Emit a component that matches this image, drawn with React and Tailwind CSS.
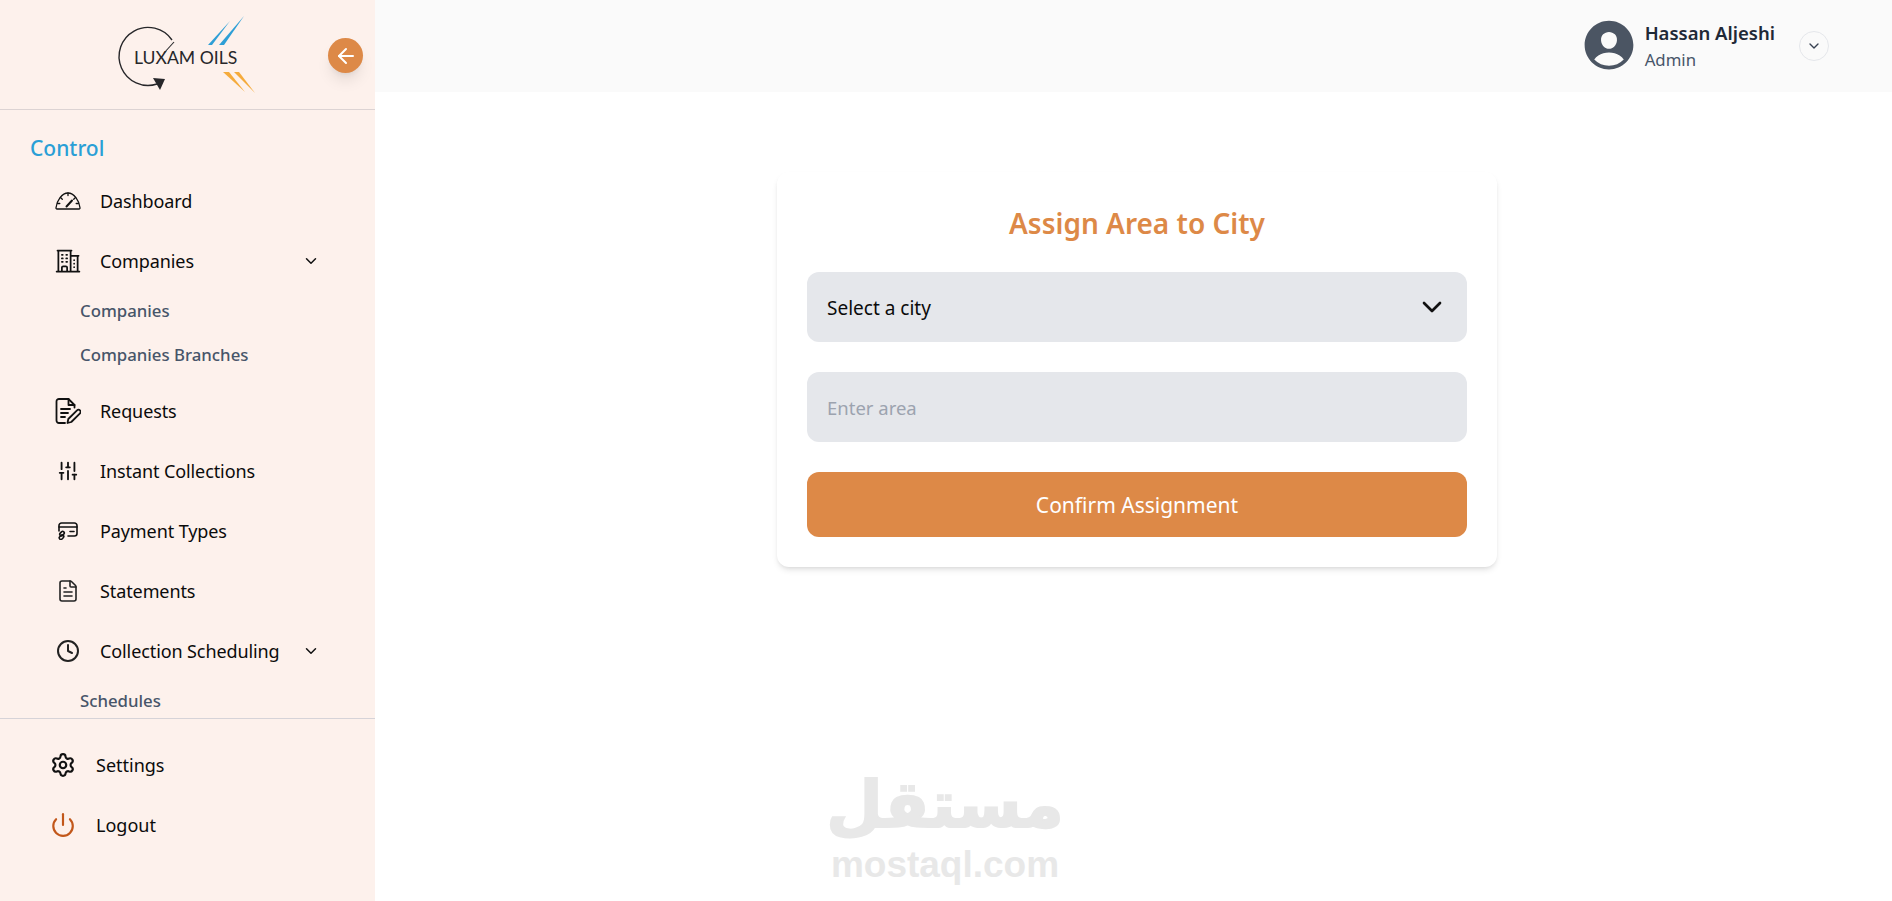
import { ArrowLeft, ChevronDown, SlidersVertical, FileText, Clock, Settings, Power } from "lucide-react";
import { HiOutlineBuildingOffice2 } from "react-icons/hi2";
import { IoPersonCircle } from "react-icons/io5";

const FONT = "[font-family:'Noto_Sans',sans-serif]";

// Hand drawn, no icon package has these three
function GaugeIcon() {
  return (
    <svg width="26" height="18" viewBox="0 0 26 18" fill="none" stroke="#111" strokeWidth="1.3" strokeLinecap="round" strokeLinejoin="round">
      <path d="M2 17h22a1 1 0 0 0 1-1.2C24.2 8.5 19 1 13 1S1.800 8.500 1 15.800A1 1 0 0 0 2 17z" />
      <path d="M13 1v2.500M5.500 5.500l1.800 1.800M20.500 5.500l-1.800 1.800M2.500 11.500h2.300M23.500 11.500h-2.300" />
      <path d="M11.500 14.500l5.500-6" strokeWidth="2" />
    </svg>
  );
}

function RequestsIcon() {
  return (
    <svg width="26" height="26" viewBox="0 0 26 26" fill="none" stroke="#111" strokeWidth="1.8" strokeLinecap="round" strokeLinejoin="round">
      <path d="M10 25H4a2.500 2.500 0 0 1-2.500-2.500v-19A2.500 2.500 0 0 1 4 1h9.500l6 6v2.500" />
      <path d="M13.500 1v6h6" />
      <path d="M6 11h9M6 15h7M6 19h4" />
      <path d="M12.500 25l.8-4 8.700-8.700a2 2 0 0 1 3 3L16.300 24z" />
    </svg>
  );
}

function PaymentIcon() {
  return (
    <svg width="20" height="18" viewBox="0 0 20 18" fill="none" stroke="#111" strokeWidth="1.6" strokeLinecap="round" strokeLinejoin="round">
      <path d="M1 9V3.500A2.500 2.500 0 0 1 3.500 1h13A2.500 2.500 0 0 1 19 3.500v8a2.500 2.500 0 0 1-2.500 2.500H10" />
      <path d="M1 5h18M12 9.500h4" />
      <rect x="1.500" y="10" width="5" height="3.200" rx="1.600" transform="rotate(-45 4 11.600)" />
      <rect x="1" y="13.600" width="5" height="3.200" rx="1.600" transform="rotate(-45 3.500 15.200)" />
    </svg>
  );
}

function Logo() {
  return (
    <svg width="150" height="84" viewBox="115 14 150 84" fill="none">
      <path d="M173 41A29 29 0 1 0 158 85" stroke="#27272a" strokeWidth="1.400" />
      <path d="M154 79l12 1-5 11z" fill="#27272a" />
      <path d="M165 54l10-11" stroke="#27272a" strokeWidth="1.100" />
      <text x="135" y="65" fontFamily="Lato, sans-serif" fontWeight="400" fontSize="17.6" fill="#27272a">LUXAM OILS</text>
      <path d="M209 46h4l18-24z" fill="#2e9fd6" />
      <path d="M220 46h5l20-29z" fill="#2e9fd6" />
      <path d="M224 73h6l16 20z" fill="#f5ab3c" />
      <path d="M235 73h5l16 21z" fill="#f5ab3c" />
    </svg>
  );
}

function NavItem({ icon, label, hasMenu }) {
  return (
    <div className="flex items-center h-[60px] pl-[50px] pr-[55px]">
      <span className="w-[35px] h-[26px] flex items-center justify-center shrink-0 mr-[15px]">{icon}</span>
      <span className="flex-1 text-[18px] tracking-[-0.1px] text-[#0b0b0b] whitespace-nowrap">{label}</span>
      {hasMenu && <ChevronDown size={18} color="#111" />}
    </div>
  );
}

function SubItem({ label }) {
  return (
    <div className="flex items-center h-[44px] pl-[80px] text-[16.8px] font-medium text-[#475569]">{label}</div>
  );
}

export default function App() {
  return (
    <div className={`relative flex h-[901px] w-[1892px] overflow-hidden bg-white ${FONT}`}>
      <aside className="relative flex flex-col w-[375px] shrink-0 bg-[#fdf1ec]">
        <div className="flex items-center justify-center h-[110px] pl-[3px] border-b border-[#dcd3d3]">
          <Logo />
        </div>
        <button className="absolute left-[328px] top-[38px] w-[35px] h-[35px] rounded-full bg-[#dd8947] flex items-center justify-center shadow-lg">
          <ArrowLeft size={24} color="#fff" />
        </button>

        <nav className="flex-1 overflow-hidden">
          <h2 className="pl-[30px] pt-[22px] pb-[7px] text-[21px] leading-[32px] font-medium text-[#2a9fd6]">Control</h2>
          <NavItem icon={<GaugeIcon />} label="Dashboard" />
          <NavItem icon={<HiOutlineBuildingOffice2 size={28} color="#111" />} label="Companies" hasMenu />
          <div className="-mt-[2px] mb-[4px]">
            <SubItem label="Companies" />
            <SubItem label="Companies Branches" />
          </div>
          <NavItem icon={<RequestsIcon />} label="Requests" />
          <NavItem icon={<SlidersVertical size={22} color="#111" />} label="Instant Collections" />
          <NavItem icon={<PaymentIcon />} label="Payment Types" />
          <NavItem icon={<FileText size={24} color="#222" strokeWidth={1.6} />} label="Statements" />
          <NavItem icon={<Clock size={24} color="#222" />} label="Collection Scheduling" hasMenu />
          <div className="-mt-[2px]">
            <SubItem label="Schedules" />
          </div>
        </nav>

        <div className="h-[183px] shrink-0 border-t border-[#d6d3d8] pt-[16px]">
          <div className="flex items-center h-[60px] pl-[50px]">
            <Settings size={26} color="#111" className="mr-[20px]" />
            <span className="text-[18px] text-[#0b0b0b]">Settings</span>
          </div>
          <div className="flex items-center h-[60px] pl-[50px]">
            <Power size={26} color="#c2571a" className="mr-[20px]" />
            <span className="text-[18px] text-[#0b0b0b]">Logout</span>
          </div>
        </div>
      </aside>

      <div className="flex-1 flex flex-col">
        <header className="flex items-center justify-end h-[92px] bg-[#fafafa] pr-[63px]">
          <IoPersonCircle size={60} color="#4b5563" className="mr-[6px] -mt-[2px]" />
          <div className="mr-[24px]">
            <div className="text-[18.500px] leading-[28px] font-semibold text-[#1f2937]">Hassan Aljeshi</div>
            <div className="text-[16.800px] leading-[26px] text-[#475569]">Admin</div>
          </div>
          <div className="w-[30px] h-[30px] rounded-full border border-[#e5e7eb] flex items-center justify-center">
            <ChevronDown size={16} color="#374151" />
          </div>
        </header>

        <main className="flex-1 flex justify-center pt-[80px] pl-[7px]">
          <div className="w-[720px] h-[395px] bg-white rounded-[12px] shadow-md p-[30px]">
            <h1 className="h-[40px] mb-[30px] text-center text-[28px] leading-[42px] font-semibold text-[#dd8947]">Assign Area to City</h1>
            <div className="flex items-center justify-between h-[70px] mb-[30px] pl-[20px] pr-[19px] rounded-[12px] bg-[#e5e7eb] text-[19px] text-[#0b0b0b]">
              <span className="pt-[3px]">Select a city</span>
              <ChevronDown size={32} color="#111" />
            </div>
            <input
              placeholder="Enter area"
              className="block w-full h-[70px] mb-[30px] px-[20px] rounded-[12px] bg-[#e5e7eb] text-[18.500px] placeholder:text-[#9ca3af] outline-none"
            />
            <button className="block w-full h-[65px] pt-[2px] rounded-[12px] bg-[#dd8947] text-white text-[21px]">Confirm Assignment</button>
          </div>
        </main>
      </div>

      {/* site watermark lying over the page */}
      <div className="absolute left-[831px] top-[763px] w-[228px] flex flex-col items-center text-[#e8e8e8] font-bold pointer-events-none">
        <div className="text-[65px] leading-[84px] whitespace-nowrap [-webkit-text-stroke:2px_#e8e8e8] [font-family:'DejaVu_Sans',sans-serif]">مستقل</div>
        <div className="text-[37px] leading-[36px] whitespace-nowrap [font-family:'Liberation_Sans',sans-serif]">mostaql.com</div>
      </div>
    </div>
  );
}
